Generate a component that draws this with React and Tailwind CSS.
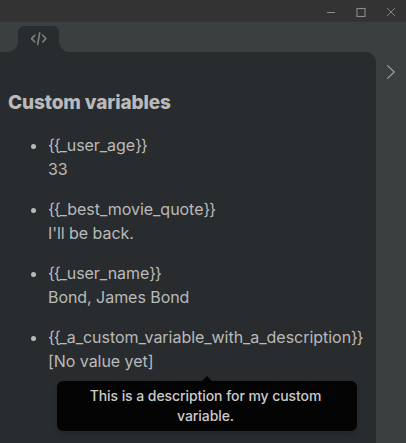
const variables = [
  { name: '_user_age', value: '33' },
  { name: '_best_movie_quote', value: "I'll be back." },
  { name: '_user_name', value: 'Bond, James Bond' },
  {
    name: '_a_custom_variable_with_a_description',
    value: '[No value yet]',
    description: 'This is a description for my custom variable.',
  },
];

function TitleBar() {
  return (
    <header className="flex h-[22px] shrink-0 justify-end bg-[#333333] text-[#8c8c8c]">
      <svg className="h-[22px] w-[90px]" viewBox="0 0 90 22" fill="none" stroke="currentColor">
        <path d="M11 12.5H19" />
        <rect x="41" y="8.5" width="8" height="8" strokeWidth="1.1" />
        <path d="M71 8L79 16M79 8L71 16" strokeWidth="0.9" />
      </svg>
    </header>
  );
}

function TabStrip() {
  return (
    <div className="flex h-[30px] shrink-0 items-end pl-2">
      <span className="h-2.5 w-2.5 bg-[radial-gradient(circle_at_0_0,transparent_9.5px,#282c2e_10px)]" />
      <div className="flex h-[26px] w-[41px] items-center justify-center rounded-t-md bg-[#282c2e] text-[#7e8081]">
        <svg className="h-4 w-[18px]" viewBox="0 0 18 16" fill="none" stroke="currentColor" strokeWidth="1.6" strokeLinecap="round" strokeLinejoin="round">
          <path d="M4.8 4.2L1.6 7.6L4.8 11M12.7 4.2L15.9 7.6L12.7 11M9.7 1.8L7.7 13.4" />
        </svg>
      </div>
      <span className="h-2.5 w-2.5 bg-[radial-gradient(circle_at_100%_0,transparent_9.5px,#282c2e_10px)]" />
    </div>
  );
}

function Tooltip({ children }) {
  return (
    <div className="absolute top-[56px] left-[9px] w-[300px] rounded-md bg-[#040404] px-5 py-[5px] text-center text-[14px] leading-5 font-medium tracking-[-0.07px] whitespace-normal text-[#cbcbcb] shadow-md">
      <span className="absolute -top-[5px] left-[145px] h-[5px] w-2.5 bg-[#040404] [clip-path:polygon(50%_0,100%_100%,0_100%)]" />
      <span className="inline-block pr-[3px]">{children}</span>
    </div>
  );
}

function VariableName({ name }) {
  return (
    <>
      <span className="tracking-[-1.1px]">{'{{'}</span>
      <span className="tracking-[-0.03px]">{name}</span>
      <span className="tracking-[-1.1px]">{'}}'}</span>
    </>
  );
}

export default function App() {
  return (
    <div className="flex h-screen w-screen flex-col overflow-hidden bg-[#3b3f40] font-['Inter',sans-serif] text-[#bababa]">
      <TitleBar />
      <TabStrip />
      <div className="flex min-h-0 flex-1">
        <main className="w-[376px] shrink-0 rounded-tr-[10px] bg-[#282c2e] pt-[39px] pl-2">
          <h1 className="text-[19px] leading-6 font-extrabold tracking-[-0.12px]">Custom variables</h1>
          <ul className="mt-[18px] flex list-disc flex-col gap-4 pl-10 text-[16px] leading-6">
            {variables.map((item) => (
              <li key={item.name} className="relative whitespace-nowrap">
                <VariableName name={item.name} />
                <br />
                <span className="tracking-[-0.05px]">{item.value}</span>
                {item.description && <Tooltip>{item.description}</Tooltip>}
              </li>
            ))}
          </ul>
        </main>
        <aside className="flex flex-1 justify-center pt-3 text-[#a5a7a8]">
          <svg className="h-4 w-2.5" viewBox="0 0 10 16" fill="none" stroke="currentColor" strokeWidth="1.1">
            <path d="M1.3 1.3L8.3 8L1.3 14.7" />
          </svg>
        </aside>
      </div>
    </div>
  );
}
